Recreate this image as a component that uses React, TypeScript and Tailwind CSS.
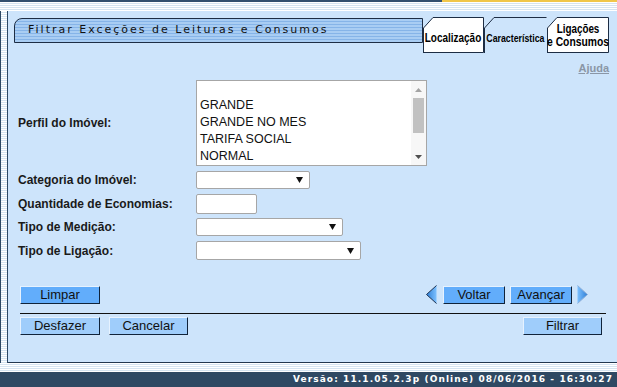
import React from "react";

const stripesH =
  "bg-[repeating-linear-gradient(to_bottom,#ffffff_0px,#ffffff_1px,#d5e4f1_1px,#d5e4f1_2px)]";

const Tab: React.FC<{ w: number; active?: boolean; children: React.ReactNode }> = ({
  w,
  active,
  children,
}) => {
  const fill = active ? "#cde4fb" : "#ffffff";
  return (
    <div className="relative h-[36px] shrink-0" style={{ width: w }}>
      <svg className="absolute inset-0" width={w} height={36}>
        <polygon
          points={`0.5,36 0.5,11 10,0.5 ${w - 0.5},0.5 ${w - 0.5},36`}
          fill={fill}
          stroke="none"
        />
        <polyline
          points={
            active
              ? `0.5,36 0.5,11 10,0.5 ${w - 0.5},0.5`
              : `0.5,36 0.5,11 10,0.5 ${w - 0.5},0.5 ${w - 0.5},35.5 0.5,35.5`
          }
          fill="none"
          stroke="#1d2d44"
          strokeWidth={1}
        />
      </svg>
      <div className="relative h-full flex flex-col items-center justify-center pt-[6px] whitespace-nowrap font-['Liberation_Sans',Arial,sans-serif] font-bold text-black leading-[13px]">
        {children}
      </div>
    </div>
  );
};

const Narrow: React.FC<{ className?: string; children: React.ReactNode }> = ({
  className,
  children,
}) => <span className={`inline-block whitespace-nowrap ${className ?? ""}`}>{children}</span>;

const Select: React.FC<{ w: number; h: number }> = ({ w, h }) => (
  <div
    className="bg-white border border-[#a6a6a6] rounded-[2px] flex items-center justify-end pr-[6px]"
    style={{ width: w, height: h }}
  >
    <svg width="7" height="6" viewBox="0 0 7 6">
      <polygon points="0,0 7,0 3.5,6" fill="#111" />
    </svg>
  </div>
);

const Btn: React.FC<{ w: number; strong?: boolean; children: React.ReactNode }> = ({
  w,
  strong,
  children,
}) => (
  <div
    className={`h-[18px] flex items-center justify-center text-[13px] text-[#111] border border-t-[#e6f2ff] border-l-[#e6f2ff] border-r-[#10233a] border-b-[#10233a] ${
      strong ? "bg-[#62adfb]" : "bg-[#9fcdfb]"
    }`}
    style={{ width: w }}
  >
    {children}
  </div>
);

const Arrow: React.FC<{ dir: "left" | "right" }> = ({ dir }) => (
  <svg width="11" height="19" viewBox="0 0 11 19">
    <defs>
      <linearGradient id={`g${dir}`} x1="0" y1="0" x2="1" y2="0">
        <stop offset="0" stopColor={dir === "left" ? "#2f7fd6" : "#7cc0ff"} />
        <stop offset="1" stopColor={dir === "left" ? "#7cc0ff" : "#2f7fd6"} />
      </linearGradient>
    </defs>
    {dir === "left" ? (
      <>
        <polygon points="10.5,0.5 0.5,9.5 10.5,18.5" fill={`url(#g${dir})`} />
        <polyline points="10.5,0.5 0.5,9.5 10.5,18.5" fill="none" stroke="#1e3350" />
      </>
    ) : (
      <>
        <polygon points="0.5,0.5 10.5,9.5 0.5,18.5" fill={`url(#g${dir})`} />
        <polyline points="0.5,0.5 10.5,9.5 0.5,18.5" fill="none" stroke="#8fb0d8" />
      </>
    )}
  </svg>
);

const Row: React.FC<{ label: string; className?: string; children: React.ReactNode }> = ({
  label,
  className,
  children,
}) => (
  <div className={`flex items-center ${className ?? ""}`}>
    <div className="w-[178px] shrink-0 text-[12px] font-bold text-[#1a1a1a]">{label}</div>
    {children}
  </div>
);

export default function App() {
  return (
    <div className="w-[617px] h-[387px] overflow-hidden flex flex-col bg-white font-['Liberation_Sans',Arial,sans-serif]">
      {/* top strip */}
      <div className="flex h-[11px] shrink-0">
        <div className={`w-[442px] border-t-2 border-[#33506f] ${stripesH}`} />
        <div className={`flex-1 border-t-2 border-[#f0c64a] ${stripesH}`} />
      </div>

      <div className="flex h-[352px] shrink-0">
        {/* left strip */}
        <div className={`w-[8px] shrink-0 border-l border-r border-[#2c4864] ${stripesH}`} />

        {/* panel */}
        <div className="flex-1 flex flex-col bg-[#cde4fb] border-b border-[#23384f]">
          <div className="flex ml-[6px] mt-[6px]">
            <div className="mt-[1px] w-[409px] h-[25px] rounded-tl-[8px] border border-[#1d2d44] bg-[repeating-linear-gradient(to_bottom,#a9cdf3_0px,#a9cdf3_2px,#86b4e8_2px,#86b4e8_3px)] flex items-center pl-[13px]">
              <span className="font-['DejaVu_Sans',Verdana,sans-serif] text-[11px] tracking-[2px] text-[#111]">
                Filtrar Exceções de Leituras e Consumos
              </span>
            </div>
            <Tab w={61}>
              <Narrow className="text-[12px] scale-x-[0.83]">Localização</Narrow>
            </Tab>
            <Tab w={63} active>
              <Narrow className="text-[11px] scale-x-[0.8]">Característica</Narrow>
            </Tab>
            <Tab w={62}>
              <div className="flex flex-col items-center -mt-[5px]">
                <Narrow className="text-[12px] scale-x-[0.82]">Ligações</Narrow>
                <Narrow className="text-[12px] scale-x-[0.86]">e Consumos</Narrow>
              </div>
            </Tab>
          </div>

          <div className="flex justify-end pr-[8px] mt-[7px] h-[14px]">
            <span className="text-[11px] font-bold text-[#8a96a6] underline">Ajuda</span>
          </div>

          <div className="pl-[10px] mt-[6px] flex flex-col">
            <Row label="Perfil do Imóvel:">
              <div className="w-[231px] h-[86px] bg-white border border-[#a6a6a6] flex">
                <div className="flex-1 pl-[3px] -mt-[1px] text-[12.5px] leading-[17px] text-[#111]">
                  <div className="h-[17px]" />
                  <div>GRANDE</div>
                  <div>GRANDE NO MES</div>
                  <div>TARIFA SOCIAL</div>
                  <div>NORMAL</div>
                </div>
                <div className="w-[15px] flex flex-col items-center bg-[#f7f7f7]">
                  <div className="h-[17px] flex items-center justify-center">
                    <svg width="7" height="4" viewBox="0 0 7 4">
                      <polygon points="0,4 7,4 3.5,0" fill="#a3a3a3" />
                    </svg>
                  </div>
                  <div className="w-[11px] h-[35px] bg-[#c1c1c1]" />
                  <div className="flex-1" />
                  <div className="h-[17px] flex items-center justify-center">
                    <svg width="7" height="4" viewBox="0 0 7 4">
                      <polygon points="0,0 7,0 3.5,4" fill="#505050" />
                    </svg>
                  </div>
                </div>
              </div>
            </Row>
            <Row label="Categoria do Imóvel:" className="mt-[5px]">
              <Select w={114} h={18} />
            </Row>
            <Row label="Quantidade de Economias:" className="mt-[5px]">
              <div className="w-[61px] h-[20px] bg-white border border-[#a6a6a6] rounded-[2px]" />
            </Row>
            <Row label="Tipo de Medição:" className="mt-[4px]">
              <Select w={147} h={18} />
            </Row>
            <Row label="Tipo de Ligação:" className="mt-[5px]">
              <Select w={165} h={19} />
            </Row>
          </div>

          <div className="flex items-center justify-between pl-[12px] pr-[29px] mt-[25px]">
            <Btn w={80} strong>
              Limpar
            </Btn>
            <div className="flex items-center">
              <Arrow dir="left" />
              <div className="flex gap-[5px] ml-[6px] mr-[5px]">
                <Btn w={62} strong>
                  Voltar
                </Btn>
                <Btn w={62} strong>
                  Avançar
                </Btn>
              </div>
              <Arrow dir="right" />
            </div>
          </div>

          <div className="ml-[12px] mr-[11px] mt-[9px] h-px bg-[#111]" />

          <div className="flex items-center justify-between pl-[12px] pr-[15px] mt-[3px]">
            <div className="flex gap-[9px]">
              <Btn w={80}>Desfazer</Btn>
              <Btn w={79}>Cancelar</Btn>
            </div>
            <Btn w={79}>Filtrar</Btn>
          </div>
        </div>
      </div>

      {/* bottom strip */}
      <div className={`h-[9px] shrink-0 ${stripesH}`} />

      {/* footer */}
      <div className="flex-1 bg-[#2f4963] flex items-center justify-end pr-[4px]">
        <span className="font-['DejaVu_Sans',Verdana,sans-serif] font-bold text-[9px] tracking-[1.1px] text-white">
          Versão: 11.1.05.2.3p (Online) 08/06/2016 - 16:30:27
        </span>
      </div>
    </div>
  );
}
